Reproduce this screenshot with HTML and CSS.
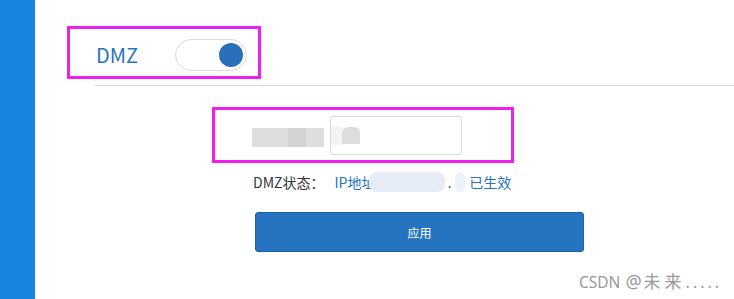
FILE: index.html
```html
<!DOCTYPE html>
<html lang="zh-CN">
<head>
<meta charset="utf-8">
<title>DMZ</title>
<link rel="stylesheet" href="styles.css">
</head>
<body>
<div class="page">
  <aside class="sidebar"></aside>
  <main class="main">
    <div class="mark head-mark">
      <span class="title">DMZ</span>
      <span class="toggle"><span class="knob"></span></span>
    </div>
    <div class="divider"></div>
    <div class="mark field-mark">
      <div class="mosaic">
        <span class="m m1"></span><span class="m m2"></span><span class="m m3"></span><span class="m m4"></span>
      </div>
      <div class="input">
        <span class="m m5"></span><span class="m m6"></span>
      </div>
    </div>
    <div class="status">
      <span class="label">DMZ状态：</span>
      <span class="value">IP地址<span class="blur-ip"></span><span class="dot">.</span><span class="blob"></span>已生效</span>
    </div>
    <button class="apply" type="button">应用</button>
  </main>
  <div class="watermark"><span class="wm-latin">CSDN</span><span class="wm-at">@</span><span class="wm-cjk">未来</span><span class="wm-dots">.....</span></div>
</div>
</body>
</html>
```

FILE: styles.css
```css
html, body {
  margin: 0;
  padding: 0;
  background: #ffffff;
}
body {
  font-family: "Noto Sans CJK SC", "Noto Sans", sans-serif;
  width: 734px;
  height: 299px;
  overflow: hidden;
}
.page {
  display: flex;
  height: 299px;
  position: relative;
}
.sidebar {
  width: 35px;
  flex: none;
  background: #1784dd;
}
.main {
  flex: 1;
  display: flex;
  flex-direction: column;
  align-items: flex-start;
}
.mark {
  box-sizing: border-box;
  border: 3px solid #f01ff0;
}
.head-mark {
  margin: 26px 0 0 32px;
  width: 194px;
  height: 53px;
  padding: 10px 0 0 26px;
  display: flex;
  align-items: flex-start;
}
.title {
  font-size: 20px;
  line-height: 32px;
  color: #2a72c0;
  width: 79px;
}
.toggle {
  box-sizing: border-box;
  width: 72px;
  height: 32px;
  border: 1px solid #dcdcdc;
  border-radius: 16px;
  display: flex;
  align-items: center;
  justify-content: flex-end;
  padding-right: 3px;
  background: #fff;
}
.knob {
  width: 24px;
  height: 24px;
  border-radius: 50%;
  background: #2a6fba;
}
.divider {
  align-self: stretch;
  margin: 6px 0 0 60px;
  height: 1px;
  background: #d9d9d9;
}
.field-mark {
  margin: 21px 0 0 177px;
  width: 302px;
  height: 56px;
  display: flex;
  align-items: flex-start;
  padding: 6px 0 0 37px;
}
.mosaic {
  display: flex;
  margin-top: 12px;
  width: 78px;
}
.m {
  display: block;
  height: 19px;
}
.m1 { width: 18px; background: #dddddd; }
.m2 { width: 18px; background: #dcdedf; }
.m3 { width: 18px; background: #d4d3d1; }
.m4 { width: 18px; background: #dedede; }
.input {
  box-sizing: border-box;
  width: 132px;
  height: 39px;
  border: 1px solid #dcdcdc;
  border-radius: 3px;
  display: flex;
  align-items: flex-start;
  padding-top: 9px;
}
.m5 { width: 11px; background: #f3f5f5; height: 19px; }
.m6 { width: 18px; background: #dddddd; height: 17px; border-radius: 6px 6px 0 0; margin-top: 1px; }
.status {
  margin: 9px 0 0 218px;
  font-size: 14px;
  line-height: 20px;
  color: #333333;
  display: flex;
  align-items: center;
}
.value {
  color: #2672c0;
  margin-left: 10px;
  display: flex;
  align-items: center;
}
.blur-ip {
  display: inline-block;
  width: 76px;
  height: 20px;
  margin-left: -6px;
  background: #e6edf7;
  border-radius: 8px;
}
.dot {
  margin-left: 2px;
}
.blob {
  display: inline-block;
  width: 10px;
  height: 20px;
  margin: 0 4px 0 4px;
  background: #eef3fa;
  border-radius: 5px;
}
.apply {
  margin: 20px 0 0 220px;
  box-sizing: border-box;
  width: 329px;
  height: 40px;
  background: #2673c0;
  border: 1px solid #1c5fa8;
  border-radius: 3px;
  color: #ffffff;
  font-family: "Noto Sans CJK SC", sans-serif;
  font-size: 12px;
  padding: 0;
}
.watermark {
  position: absolute;
  left: 579px;
  top: 270px;
  display: flex;
  align-items: baseline;
  font-family: "Noto Sans", "Noto Sans CJK SC", sans-serif;
  font-size: 16px;
  line-height: 22px;
  color: #9a9a9a;
  white-space: nowrap;
}
.wm-latin {
  font-size: 15.5px;
}
.wm-at {
  font-size: 18px;
  margin-left: 5px;
}
.wm-cjk {
  font-family: "Noto Sans CJK SC", sans-serif;
  font-size: 17px;
  letter-spacing: 4px;
  margin-left: 2px;
}
.wm-dots {
  font-size: 16px;
  letter-spacing: 3px;
}
```
